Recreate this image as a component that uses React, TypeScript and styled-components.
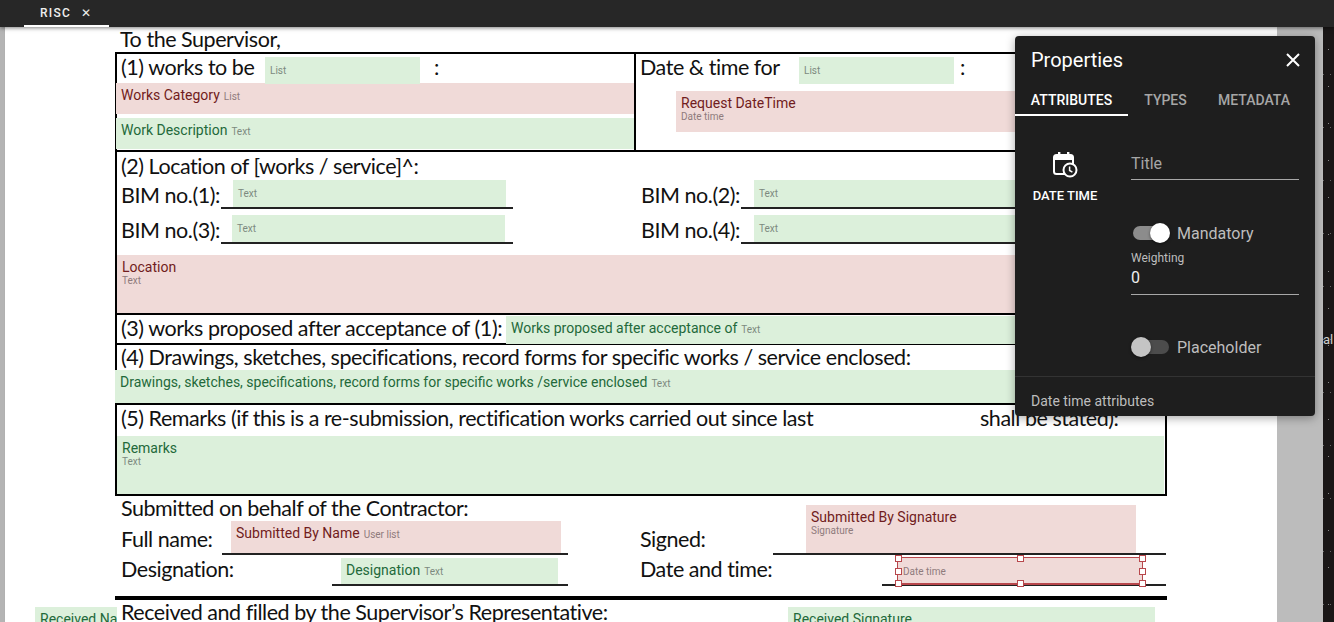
import { createGlobalStyle, styled } from 'styled-components';

const Global = createGlobalStyle`
  html, body { margin: 0; padding: 0; width: 1334px; height: 622px; overflow: hidden; background: #b4b4b4; }
  * { box-sizing: border-box; }
`;

const Screen = styled.div`
  position: relative;
  width: 1334px;
  height: 622px;
  overflow: hidden;
  font-family: Roboto, sans-serif;
  display: flex;
  flex-direction: column;
`;

const TopBar = styled.div`
  height: 27px;
  flex: none;
  background: #272727;
  padding-left: 24px;
  box-shadow: 0 1px 4px rgba(0, 0, 0, 0.5);
  position: relative;
  z-index: 2;
`;

const Tab = styled.div`
  width: 85px;
  height: 27px;
  border-bottom: 2px solid #fff;
  color: #eee;
  font-size: 12px;
  font-weight: 500;
  letter-spacing: 1.3px;
  padding: 6px 0 0 16px;
  display: flex;
  gap: 10px;
`;

const Workspace = styled.div`
  flex: 1;
  display: flex;
  min-height: 0;
  padding-left: 5px;
  background: #b4b4b4;
`;

const Sheet = styled.div`
  width: 1272px;
  flex: none;
  background: #fff;
  padding-left: 110px;
  box-shadow: 1px 0 2px rgba(0, 0, 0, 0.2);
`;

const Gutter = styled.div`
  width: 46px;
  flex: none;
  background: #bcbcbc;
`;

const Night = styled.div`
  flex: 1;
  padding-top: 305px;
  background-color: #1a1717;
  background-image: radial-gradient(circle, #8a8a8a 0.6px, transparent 1px),
    radial-gradient(circle, #666 0.6px, transparent 1px);
  background-size: 9px 37px, 7px 53px;
  background-position: 1px 4px, 4px 21px;
  color: #ccc;
  font-size: 13px;
  overflow: hidden;
`;

const Doc = styled.div`
  width: 1052px;
  color: #111;
  font-family: Lato, sans-serif;
  font-size: 21.5px;
  letter-spacing: -0.46px;
  white-space: nowrap;
`;

const Line = styled.div<{ $h: number; $pad?: number }>`
  height: ${(p) => p.$h}px;
  padding-left: ${(p) => p.$pad ?? 4}px;
  line-height: ${(p) => p.$h}px;
`;

const Grid = styled.div`
  border: 2px solid #000;
  border-bottom: none;
`;

const Section = styled.div<{ $h: number }>`
  height: ${(p) => p.$h}px;
  border-bottom: 2px solid #000;
`;

const Split = styled.div`
  height: 98px;
  border-bottom: 2px solid #000;
  display: grid;
  grid-template-columns: 517px 1fr;
`;

const Cell = styled.div`
  & + & { border-left: 2px solid #000; }
`;

const Row = styled.div<{ $h: number }>`
  display: flex;
  align-items: flex-start;
  height: ${(p) => p.$h}px;
  line-height: ${(p) => p.$h - 2}px;
`;

const Label = styled.div<{ $w?: number }>`
  flex: none;
  width: ${(p) => (p.$w ? `${p.$w}px` : 'auto')};
  padding-left: 4px;
`;

const Colon = styled.div<{ $ml: number }>`
  margin-left: ${(p) => p.$ml}px;
`;

const Field = styled.div<{ $w: number; $h: number; $req?: boolean; $ml?: number; $mt?: number }>`
  flex: none;
  margin-left: ${(p) => p.$ml ?? 0}px;
  margin-top: ${(p) => p.$mt ?? 0}px;
  width: ${(p) => p.$w}px;
  height: ${(p) => p.$h}px;
  background: ${(p) => (p.$req ? '#f0dad8' : '#dcf0db')};
  color: ${(p) => (p.$req ? '#701c20' : '#23693a')};
  --type: ${(p) => (p.$req ? '#8f7b7c' : '#7d8a7f')};
  font-family: Roboto, sans-serif;
  font-size: 14px;
  letter-spacing: 0;
  line-height: 16px;
  padding: 4px 5px;
  overflow: hidden;
`;

const FieldType = styled.span<{ $block?: boolean }>`
  display: ${(p) => (p.$block ? 'block' : 'inline')};
  margin-top: ${(p) => (p.$block ? 1 : 0)}px;
  font-size: 10px;
  line-height: 10px;
  color: var(--type);
  span + & { margin-left: 4px; }
`;

const Name = styled.span``;

const Selected = styled(Field)`
  position: relative;
  margin-bottom: -1px;
  border: 1px solid #b8474c;
  border-bottom-width: 2px;
  padding: 4px 5px;
  overflow: visible;
`;

const Handle = styled.i<{ $x: string; $y: string }>`
  position: absolute;
  left: ${(p) => p.$x};
  top: ${(p) => p.$y};
  width: 7px;
  height: 7px;
  margin: -3px 0 0 -3px;
  background: #fff;
  border: 1px solid #b8474c;
`;

const BimGrid = styled.div`
  display: grid;
  grid-template-columns: 520px 1fr;
  row-gap: 6px;
  margin-bottom: 11px;
`;

const BimRow = styled.div`
  display: flex;
  height: 29px;
  line-height: 31px;
`;

const Slot = styled.div<{ $w: number }>`
  display: flex;
  align-items: flex-end;
  flex: none;
  width: ${(p) => p.$w}px;
  border-bottom: 2px solid #222;
`;

const SignGrid = styled.div`
  display: grid;
  grid-template-columns: 519px 1fr;
`;

const SignCol = styled.div`
  display: flex;
  flex-direction: column;
`;

const SignRow = styled.div<{ $h: number; $bottom: number }>`
  display: flex;
  align-items: flex-end;
  height: ${(p) => p.$h}px;
  line-height: 26px;
  & > ${Label} {
    padding-left: 6px;
    padding-bottom: ${(p) => p.$bottom}px;
  }
`;

const HeavyRule = styled.div`
  height: 4px;
  margin-top: 10px;
  background: #000;
`;

const LastRow = styled.div`
  display: flex;
  align-items: flex-start;
  margin-left: -80px;
  line-height: 24px;
`;

const Panel = styled.div`
  position: absolute;
  left: 1015px;
  top: 36px;
  width: 300px;
  height: 380px;
  background: #1e1e1e;
  border-radius: 4px;
  box-shadow: 0 2px 10px rgba(0, 0, 0, 0.35);
  color: #fff;
  display: flex;
  flex-direction: column;
  z-index: 3;
`;

const PanelHead = styled.div`
  height: 48px;
  padding: 12px 10px 0 16px;
  display: flex;
  justify-content: space-between;
  font-size: 20px;
  line-height: 24px;
`;

const Tabs = styled.div`
  display: flex;
  height: 32px;
`;

const PanelTab = styled.div<{ $on?: boolean; $w: number }>`
  width: ${(p) => p.$w}px;
  text-align: center;
  font-size: 14px;
  font-weight: 500;
  line-height: 32px;
  color: ${(p) => (p.$on ? '#fff' : '#a6a6a6')};
  border-bottom: 2px solid ${(p) => (p.$on ? '#fff' : 'transparent')};
`;

const PanelBody = styled.div`
  flex: 1;
  display: grid;
  grid-template-columns: 116px 1fr;
  padding-right: 16px;
`;

const TypeCol = styled.div`
  padding: 35px 16px 0 0;
  display: flex;
  flex-direction: column;
  align-items: center;
  gap: 10px;
  font-size: 13px;
  font-weight: 500;
  white-space: nowrap;
`;

const FormCol = styled.div`
  padding-top: 31px;
`;

const TextInput = styled.div<{ $h: number; $top?: number; $dim?: boolean }>`
  height: ${(p) => p.$h}px;
  padding-top: ${(p) => p.$top ?? 0}px;
  border-bottom: 1px solid #a8a8a8;
  color: ${(p) => (p.$dim ? '#a6a6a6' : '#eee')};
  font-size: 16px;
  line-height: 24px;
`;

const SwitchRow = styled.div<{ $mt: number }>`
  margin-top: ${(p) => p.$mt}px;
  display: flex;
  align-items: center;
  gap: 8px;
  height: 24px;
  color: #bdbdbd;
  font-size: 16px;
`;

const Track = styled.div<{ $on?: boolean }>`
  position: relative;
  margin-left: 2px;
  width: 36px;
  height: 14px;
  border-radius: 7px;
  background: ${(p) => (p.$on ? '#8c8c8c' : '#4c4c4c')};
  &::after {
    content: '';
    position: absolute;
    top: -3px;
    left: ${(p) => (p.$on ? 17 : -2)}px;
    width: 20px;
    height: 20px;
    border-radius: 50%;
    background: ${(p) => (p.$on ? '#fff' : '#c4c4c4')};
    box-shadow: 0 1px 3px rgba(0, 0, 0, 0.5);
  }
`;

const SmallLabel = styled.div`
  margin-top: 5px;
  color: #bdbdbd;
  font-size: 12px;
  line-height: 16px;
`;

const PanelFoot = styled.div`
  height: 40px;
  border-top: 1px solid #333;
  padding: 16px 16px 0;
  color: #bdbdbd;
  font-size: 14px;
  line-height: 16px;
`;

function DateTimeIcon() {
  return (
    <svg width="26" height="27" viewBox="0 0 26 27" fill="none">
      <rect x="2" y="4" width="19" height="19" rx="2.5" stroke="#fff" strokeWidth="2" />
      <rect x="2" y="4" width="19" height="5" fill="#fff" />
      <rect x="6" y="1" width="2.4" height="4" fill="#fff" />
      <rect x="15" y="1" width="2.4" height="4" fill="#fff" />
      <circle cx="18" cy="19" r="6.5" fill="#1e1e1e" stroke="#fff" strokeWidth="2" />
      <path d="M17.6 15.5v4l2.8 1.6" stroke="#fff" strokeWidth="1.5" />
    </svg>
  );
}

function CloseIcon() {
  return (
    <svg width="24" height="24" viewBox="0 0 24 24" fill="none">
      <path d="M6 6l12 12M18 6L6 18" stroke="#fff" strokeWidth="2" />
    </svg>
  );
}

const handles: [string, string][] = [
  ['0', '0'], ['50%', '0'], ['100%', '0'],
  ['0', '50%'], ['100%', '50%'],
  ['0', '100%'], ['50%', '100%'], ['100%', '100%'],
];

export default function App() {
  return (
    <Screen>
      <Global />
      <TopBar>
        <Tab>
          RISC <span>✕</span>
        </Tab>
      </TopBar>
      <Workspace>
        <Sheet>
          <Doc>
            <Line $h={25} $pad={5}>To the Supervisor,</Line>
            <Grid>
              <Split>
                <Cell>
                  <Row $h={29}>
                    <Label $w={148}>(1) works to be</Label>
                    <Field $w={155} $h={27} $mt={3}><FieldType>List</FieldType></Field>
                    <Colon $ml={14}>:</Colon>
                  </Row>
                  <Field $w={518} $h={31} $req $ml={-1}><Name>Works Category</Name><FieldType>List</FieldType></Field>
                  <Field $w={518} $h={31} $ml={-1} $mt={4}><Name>Work Description</Name><FieldType>Text</FieldType></Field>
                </Cell>
                <Cell>
                  <Row $h={29}>
                    <Label $w={163}>Date &amp; time for</Label>
                    <Field $w={155} $h={27} $mt={3}><FieldType>List</FieldType></Field>
                    <Colon $ml={6}>:</Colon>
                  </Row>
                  <Field $w={400} $h={41} $req $ml={40} $mt={8}>
                    Request DateTime
                    <FieldType $block>Date time</FieldType>
                  </Field>
                </Cell>
              </Split>
              <Section $h={163}>
                <Line $h={28}>(2) Location of [works / service]^:</Line>
                <BimGrid>
                  <BimRow>
                    <Label $w={104}>BIM no.(1):</Label>
                    <Slot $w={292}><Field $w={273} $h={27} $ml={12}><FieldType>Text</FieldType></Field></Slot>
                  </BimRow>
                  <BimRow>
                    <Label $w={104}>BIM no.(2):</Label>
                    <Slot $w={330}><Field $w={320} $h={27} $ml={13}><FieldType>Text</FieldType></Field></Slot>
                  </BimRow>
                  <BimRow>
                    <Label $w={104}>BIM no.(3):</Label>
                    <Slot $w={292}><Field $w={273} $h={27} $ml={11}><FieldType>Text</FieldType></Field></Slot>
                  </BimRow>
                  <BimRow>
                    <Label $w={104}>BIM no.(4):</Label>
                    <Slot $w={330}><Field $w={320} $h={27} $ml={13}><FieldType>Text</FieldType></Field></Slot>
                  </BimRow>
                </BimGrid>
                <Field $w={960} $h={58} $req>
                  Location
                  <FieldType $block>Text</FieldType>
                </Field>
              </Section>
              <Section $h={30}>
                <Row $h={28}>
                  <Label $w={389}>(3) works proposed after acceptance of (1):</Label>
                  <Field $w={570} $h={28} $mt={1}><Name>Works proposed after acceptance of</Name><FieldType>Text</FieldType></Field>
                </Row>
              </Section>
              <Section $h={60}>
                <Line $h={25}>(4) Drawings, sketches, specifications, record forms for specific works / service enclosed:</Line>
                <Field $w={960} $h={33} $ml={-2}><Name>Drawings, sketches, specifications, record forms for specific works /service enclosed</Name><FieldType>Text</FieldType></Field>
              </Section>
              <Section $h={91}>
                <Row $h={29}>
                  <Label $w={863}>(5) Remarks (if this is a re-submission, rectification works carried out since last</Label>
                  <div>shall be stated):</div>
                </Row>
                <Field $w={1047} $h={58} $mt={2}>
                  Remarks
                  <FieldType $block>Text</FieldType>
                </Field>
              </Section>
            </Grid>
            <SignGrid>
              <SignCol>
                <Line $h={25} $pad={6}>Submitted on behalf of the Contractor:</Line>
                <SignRow $h={34} $bottom={3}>
                  <Label $w={107}>Full name:</Label>
                  <Slot $w={346}><Field $w={330} $h={32} $req $ml={9}><Name>Submitted By Name</Name><FieldType>User list</FieldType></Field></Slot>
                </SignRow>
                <SignRow $h={31} $bottom={4}>
                  <Label $w={217}>Designation:</Label>
                  <Slot $w={236}><Field $w={217} $h={26} $ml={9}><Name>Designation</Name><FieldType>Text</FieldType></Field></Slot>
                </SignRow>
              </SignCol>
              <SignCol>
                <SignRow $h={59} $bottom={3}>
                  <Label $w={139}>Signed:</Label>
                  <Slot $w={393}>
                    <Field $w={330} $h={48} $req $ml={33}>
                      Submitted By Signature
                      <FieldType $block>Signature</FieldType>
                    </Field>
                  </Slot>
                </SignRow>
                <SignRow $h={31} $bottom={4}>
                  <Label $w={248}>Date and time:</Label>
                  <Slot $w={284}>
                    <Selected $w={246} $h={28} $req $ml={15}>
                      <FieldType>Date time</FieldType>
                      {handles.map(([x, y]) => (
                        <Handle key={x + y} $x={x} $y={y} />
                      ))}
                    </Selected>
                  </Slot>
                </SignRow>
              </SignCol>
            </SignGrid>
            <HeavyRule />
            <LastRow>
              <Field $w={82} $h={22} $mt={7}>Received Name</Field>
              <Label $w={671}>Received and filled by the Supervisor’s Representative:</Label>
              <Field $w={367} $h={22} $mt={7}>Received Signature</Field>
            </LastRow>
          </Doc>
        </Sheet>
        <Gutter />
        <Night>al</Night>
      </Workspace>
      <Panel>
        <PanelHead>
          Properties
          <CloseIcon />
        </PanelHead>
        <Tabs>
          <PanelTab $on $w={113}>ATTRIBUTES</PanelTab>
          <PanelTab $w={75}>TYPES</PanelTab>
          <PanelTab $w={102}>METADATA</PanelTab>
        </Tabs>
        <PanelBody>
          <TypeCol>
            <DateTimeIcon />
            DATE TIME
          </TypeCol>
          <FormCol>
            <TextInput $h={33} $top={5} $dim>Title</TextInput>
            <SwitchRow $mt={41}><Track $on />Mandatory</SwitchRow>
            <SmallLabel>Weighting</SmallLabel>
            <TextInput $h={29}>0</TextInput>
            <SwitchRow $mt={40}><Track />Placeholder</SwitchRow>
          </FormCol>
        </PanelBody>
        <PanelFoot>Date time attributes</PanelFoot>
      </Panel>
    </Screen>
  );
}
